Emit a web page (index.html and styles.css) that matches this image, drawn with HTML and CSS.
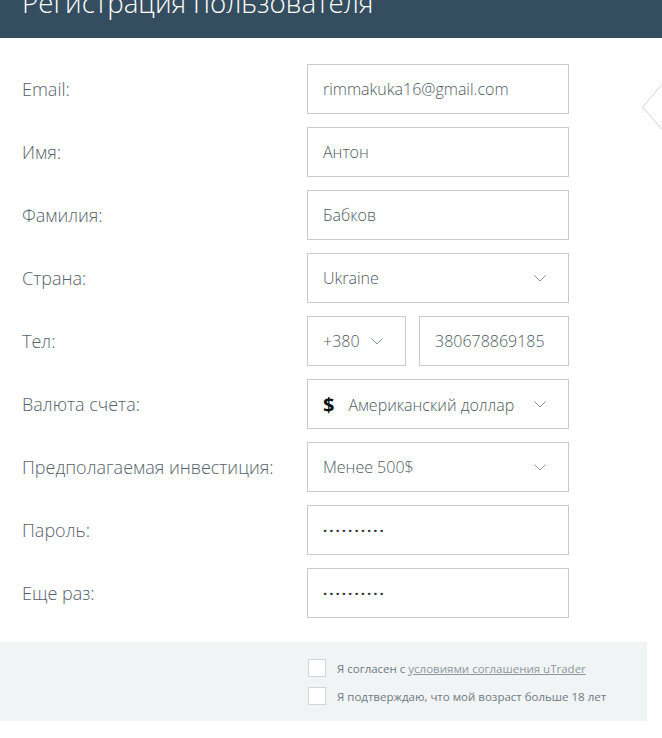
FILE: index.html
```html
<!DOCTYPE html>
<html>
<head>
    <title>Регистрация пользователя</title>
    <link rel="stylesheet" href="styles.css">
</head>
<body>
    <div class="page">
        <div class="header">
            <h1>Регистрация пользователя</h1>
        </div>

        <form class="form">
            <div class="row">
                <label>Email:</label>
                <div class="field">rimmakuka16@gmail.com</div>
            </div>
            <div class="row">
                <label>Имя:</label>
                <div class="field">Антон</div>
            </div>
            <div class="row">
                <label>Фамилия:</label>
                <div class="field">Бабков</div>
            </div>
            <div class="row">
                <label>Страна:</label>
                <div class="field select">
                    <span>Ukraine</span>
                    <svg class="caret" width="12" height="7" viewBox="0 0 12 7"><path d="M0.5 0.5 L6 6 L11.5 0.5" fill="none" stroke="#8b959b" stroke-width="1"/></svg>
                </div>
            </div>
            <div class="row">
                <label>Тел:</label>
                <div class="phone">
                    <div class="field select code">
                        <span>+380</span>
                        <svg class="caret" width="12" height="7" viewBox="0 0 12 7"><path d="M0.5 0.5 L6 6 L11.5 0.5" fill="none" stroke="#8b959b" stroke-width="1"/></svg>
                    </div>
                    <div class="field number">380678869185</div>
                </div>
            </div>
            <div class="row">
                <label>Валюта счета:</label>
                <div class="field select">
                    <span><b class="dollar">$</b>Американский доллар</span>
                    <svg class="caret" width="12" height="7" viewBox="0 0 12 7"><path d="M0.5 0.5 L6 6 L11.5 0.5" fill="none" stroke="#8b959b" stroke-width="1"/></svg>
                </div>
            </div>
            <div class="row">
                <label>Предполагаемая инвестиция:</label>
                <div class="field select">
                    <span>Менее 500$</span>
                    <svg class="caret" width="12" height="7" viewBox="0 0 12 7"><path d="M0.5 0.5 L6 6 L11.5 0.5" fill="none" stroke="#8b959b" stroke-width="1"/></svg>
                </div>
            </div>
            <div class="row">
                <label>Пароль:</label>
                <div class="field"><span class="dots">··········</span></div>
            </div>
            <div class="row">
                <label>Еще раз:</label>
                <div class="field"><span class="dots">··········</span></div>
            </div>
        </form>

        <div class="agree">
            <div class="check">
                <span class="box"></span>
                <span>Я согласен с <a href="#">условиями соглашения uTrader</a></span>
            </div>
            <div class="check">
                <span class="box"></span>
                <span>Я подтверждаю, что мой возраст больше 18 лет</span>
            </div>
        </div>

        <svg class="next" width="22" height="46" viewBox="0 0 22 46"><path d="M20 0.5 L0.7 23 L20 45.5" fill="none" stroke="#cfd3d5" stroke-width="1"/></svg>
    </div>
</body>
</html>
```

FILE: styles.css
```css
body {
    margin: 0;
    font-family: "Open Sans", Arial, sans-serif;
    background-color: #fff;
}
.page {
    position: relative;
    width: 662px;
    height: 738px;
    overflow: hidden;
}
.header {
    height: 38px;
    background-color: #354e5f;
    padding: 0 22px;
    overflow: hidden;
}
.header h1 {
    margin: -15px 0 0 0;
    font-size: 27.7px;
    line-height: 34px;
    font-weight: 300;
    color: #fff;
    white-space: nowrap;
}
.form {
    width: 647px;
    padding: 26px 0 0 22px;
    box-sizing: border-box;
    display: flex;
    flex-direction: column;
    gap: 13px;
}
.row {
    display: grid;
    grid-template-columns: 285px 262px;
    align-items: center;
    height: 50px;
}
.row label {
    font-size: 18px;
    font-weight: 300;
    color: #56636b;
}
.field {
    height: 50px;
    box-sizing: border-box;
    border: 1px solid #c9cccd;
    padding: 0 15px;
    display: flex;
    align-items: center;
    font-size: 16px;
    font-weight: 300;
    color: #4f5b63;
    background-color: #fff;
}
.select {
    justify-content: space-between;
    padding-right: 22px;
}
.caret {
    flex: none;
}
.phone {
    display: flex;
    gap: 13px;
}
.code {
    width: 99px;
    padding-right: 22px;
}
.code span {
    margin-right: 8px;
}
.number {
    width: 150px;
    padding-right: 8px;
}
.dollar {
    color: #111;
    font-size: 20px;
    font-weight: bold;
    margin-right: 14px;
    vertical-align: -1px;
}
.dots {
    color: #333;
    font-size: 15px;
    letter-spacing: 2px;
    font-weight: bold;
}
.agree {
    width: 647px;
    margin-top: 24px;
    height: 79px;
    box-sizing: border-box;
    padding: 17px 0 0 308px;
    background-color: #f1f4f5;
    display: flex;
    flex-direction: column;
    gap: 10px;
}
.check {
    display: flex;
    align-items: center;
    gap: 11px;
    font-size: 11.5px;
    color: #6e7a82;
}
.box {
    width: 18px;
    height: 18px;
    box-sizing: border-box;
    border: 1px solid #d2d6d8;
    background-color: #fff;
}
.check a {
    color: #8d979d;
}
.next {
    position: absolute;
    left: 642px;
    top: 84px;
}
```
